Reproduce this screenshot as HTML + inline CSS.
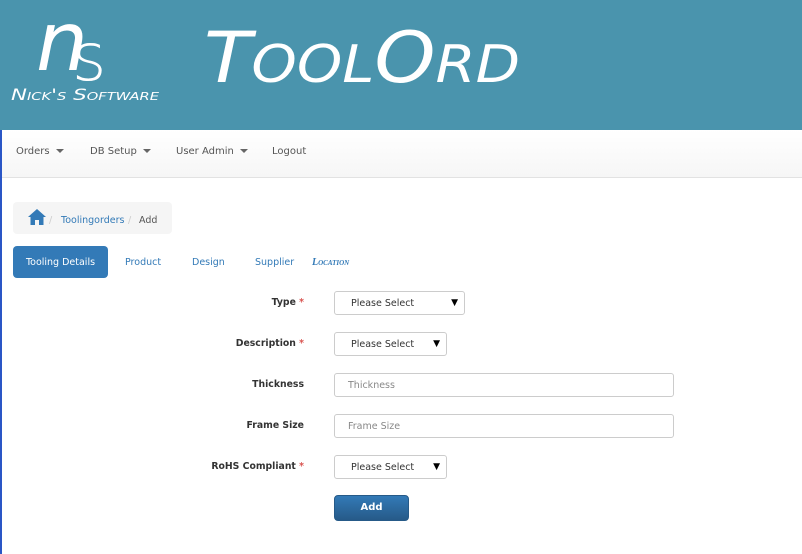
<!DOCTYPE html>
<html><head><meta charset="utf-8"><style>
body{margin:0;width:802px;height:554px;overflow:hidden;font-family:"DejaVu Sans","Liberation Sans",sans-serif;background:#fff;position:relative}
.hdr{position:absolute;left:0;top:0;width:802px;height:130px;background:#4a94ad}
.nav{position:absolute;left:0;top:130px;width:802px;height:47px;background:linear-gradient(#fff,#f6f6f6);border-bottom:1px solid #e2e2e2}
.nav span{position:absolute;top:16px;font-size:10px;color:#555}
.car{display:inline-block;width:0;height:0;border-left:4px solid transparent;border-right:4px solid transparent;border-top:4px solid #666;margin-left:6px;vertical-align:middle}
.lb{position:absolute;left:0;top:130px;width:2px;height:424px;background:#2a56c6}
.bc{position:absolute;left:13px;top:202px;width:159px;height:32px;background:#f5f5f5;border-radius:4px;font-size:9.5px}
.tab{position:absolute;top:246px;height:32px;line-height:32px;font-size:9.5px;color:#337ab7}
.lab{position:absolute;font-size:9.3px;font-weight:bold;color:#333;text-align:right;width:200px;left:104px}
.lab b{color:#d9534f}
.sel,.inp{position:absolute;left:334px;height:24px;border:1px solid #ccc;border-radius:3px;box-sizing:border-box;font-size:9.5px;line-height:23px;color:#333;background:#fff}
.inp{color:#888;padding-left:13px;width:340px}
.sel{padding-left:16px}
.sel i{position:absolute;right:6px;top:0;font-style:normal;font-size:9px;color:#000}
</style></head><body>
<div class="hdr">
<svg width="802" height="130" style="position:absolute;left:0;top:0">
<text x="36" y="70" font-family="DejaVu Sans" font-size="82" font-style="italic" font-weight="200" fill="#fff">n</text>
<text x="72" y="80" font-family="DejaVu Sans" font-size="66" font-weight="200" fill="#fff">s</text>
<text x="11" y="100" font-family="DejaVu Sans" font-size="16" font-style="italic" font-weight="200" fill="#fff" style="font-variant:small-caps" textLength="148" lengthAdjust="spacingAndGlyphs">Nick's Software</text>
<text x="204" y="82" font-family="DejaVu Sans" font-style="italic" font-weight="200" fill="#fff" textLength="316" lengthAdjust="spacingAndGlyphs"><tspan font-size="70">T</tspan><tspan font-size="52">OOL</tspan><tspan font-size="70">O</tspan><tspan font-size="52">RD</tspan></text>
</svg>
</div>
<div class="nav">
<span style="left:16px">Orders<i class="car"></i></span>
<span style="left:90px">DB Setup<i class="car"></i></span>
<span style="left:176px">User Admin<i class="car"></i></span>
<span style="left:272px">Logout</span>
</div>
<div class="lb"></div>
<div class="bc">
<svg width="18" height="16" style="position:absolute;left:15px;top:7px" viewBox="0 0 18 16"><path d="M9 0L0 8h2.5v8h4.5v-5h4v5h4.5V8H18z" fill="#337ab7"/></svg>
<span style="position:absolute;left:36px;top:13px;color:#ccc">/</span>
<span style="position:absolute;left:48px;top:13px;color:#337ab7">Toolingorders</span>
<span style="position:absolute;left:115px;top:13px;color:#ccc">/</span>
<span style="position:absolute;left:126px;top:13px;color:#555">Add</span>
</div>
<div class="tab" style="left:13px;width:95px;background:#337ab7;color:#fff;border-radius:4px;text-align:center;line-height:33px">Tooling Details</div>
<div class="tab" style="left:125px;line-height:33px">Product</div>
<div class="tab" style="left:192px;line-height:33px">Design</div>
<div class="tab" style="left:255px;line-height:33px">Supplier</div>
<div class="tab" style="left:312px;font-family:'Liberation Serif',serif;font-style:italic;font-weight:bold;font-size:10px;font-variant:small-caps;line-height:33px">Location</div>

<div class="lab" style="top:297px">Type <b>*</b></div>
<div class="sel" style="top:291px;width:131px">Please Select<i>▼</i></div>
<div class="lab" style="top:338px">Description <b>*</b></div>
<div class="sel" style="top:332px;width:113px">Please Select<i>▼</i></div>
<div class="lab" style="top:379px">Thickness</div>
<div class="inp" style="top:373px">Thickness</div>
<div class="lab" style="top:420px">Frame Size</div>
<div class="inp" style="top:414px">Frame Size</div>
<div class="lab" style="top:461px">RoHS Compliant <b>*</b></div>
<div class="sel" style="top:455px;width:113px">Please Select<i>▼</i></div>
<div style="position:absolute;left:334px;top:495px;width:75px;height:26px;box-sizing:border-box;border:1px solid #265a88;border-radius:4px;background:linear-gradient(#337ab7,#265a88);color:#fff;font-size:10px;font-weight:bold;text-align:center;line-height:24px">Add</div>
</body></html>
